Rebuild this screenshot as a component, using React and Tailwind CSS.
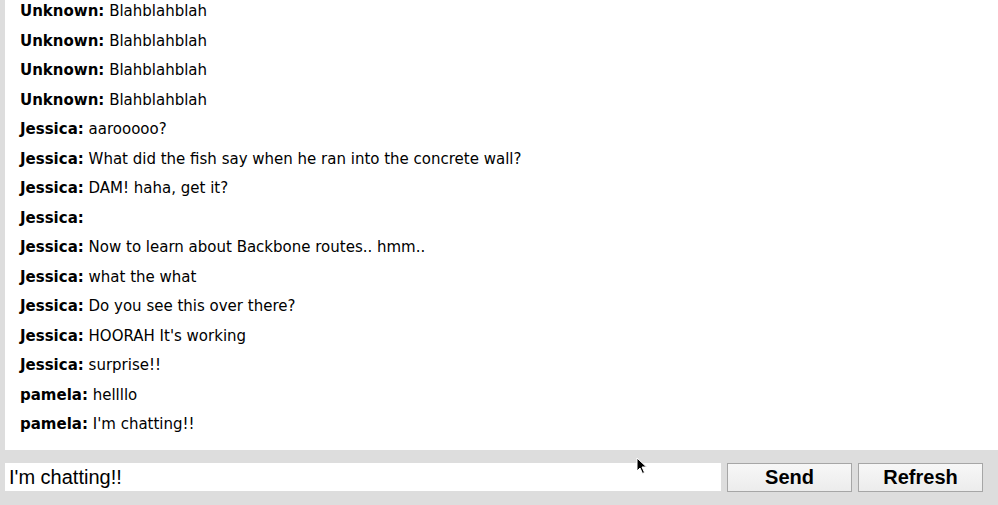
const MESSAGES = [
  ['Unknown', 'Blahblahblah'],
  ['Unknown', 'Blahblahblah'],
  ['Unknown', 'Blahblahblah'],
  ['Unknown', 'Blahblahblah'],
  ['Jessica', 'aarooooo?'],
  ['Jessica', 'What did the fish say when he ran into the concrete wall?'],
  ['Jessica', 'DAM! haha, get it?'],
  ['Jessica', ''],
  ['Jessica', 'Now to learn about Backbone routes.. hmm..'],
  ['Jessica', 'what the what'],
  ['Jessica', 'Do you see this over there?'],
  ['Jessica', "HOORAH It's working"],
  ['Jessica', 'surprise!!'],
  ['pamela', 'hellllo'],
  ['pamela', "I'm chatting!!"],
]

export default function App() {
  return (
    <div className="w-[998px] h-[505px] bg-[#dddddd] flex flex-col overflow-hidden relative">
      {/* Messages */}
      <div className="ml-[5px] h-[450px] shrink-0 bg-white overflow-hidden pl-[15px] font-['DejaVu_Sans',sans-serif] text-[15px] text-black">
        <div className="-mt-[3px]">
          {MESSAGES.map(([user, text], i) => (
            <p key={i} className="h-[29.5px] leading-[29.5px] whitespace-pre">
              <b>{user}:</b> {text}
            </p>
          ))}
        </div>
      </div>

      {/* Input row */}
      <div className="flex items-start pt-[13px] pl-[5px] font-['Liberation_Sans',Arial,sans-serif]">
        <input
          className="w-[716px] h-[28px] bg-white px-[4px] text-[20px] leading-[28px] text-black outline-none border-0"
          defaultValue="I'm chatting!!"
        />
        <button className="ml-[6px] w-[125px] h-[29px] border border-[#a6a6a6] bg-gradient-to-b from-[#f7f7f7] to-[#ececec] text-[20px] leading-[25px] font-bold text-black">
          Send
        </button>
        <button className="ml-[6px] w-[125px] h-[29px] border border-[#a6a6a6] bg-gradient-to-b from-[#f7f7f7] to-[#ececec] text-[20px] leading-[25px] font-bold text-black">
          Refresh
        </button>
      </div>

      {/* Mouse pointer */}
      <svg className="absolute left-[636px] top-[457px]" width="12" height="18" viewBox="0 0 12 18">
        <path d="M1 1 L1 14 L4 11 L6.5 16.5 L8.5 15.5 L6 10 L10.5 10 Z" fill="#000" stroke="#fff" strokeWidth="1" />
      </svg>
    </div>
  )
}
